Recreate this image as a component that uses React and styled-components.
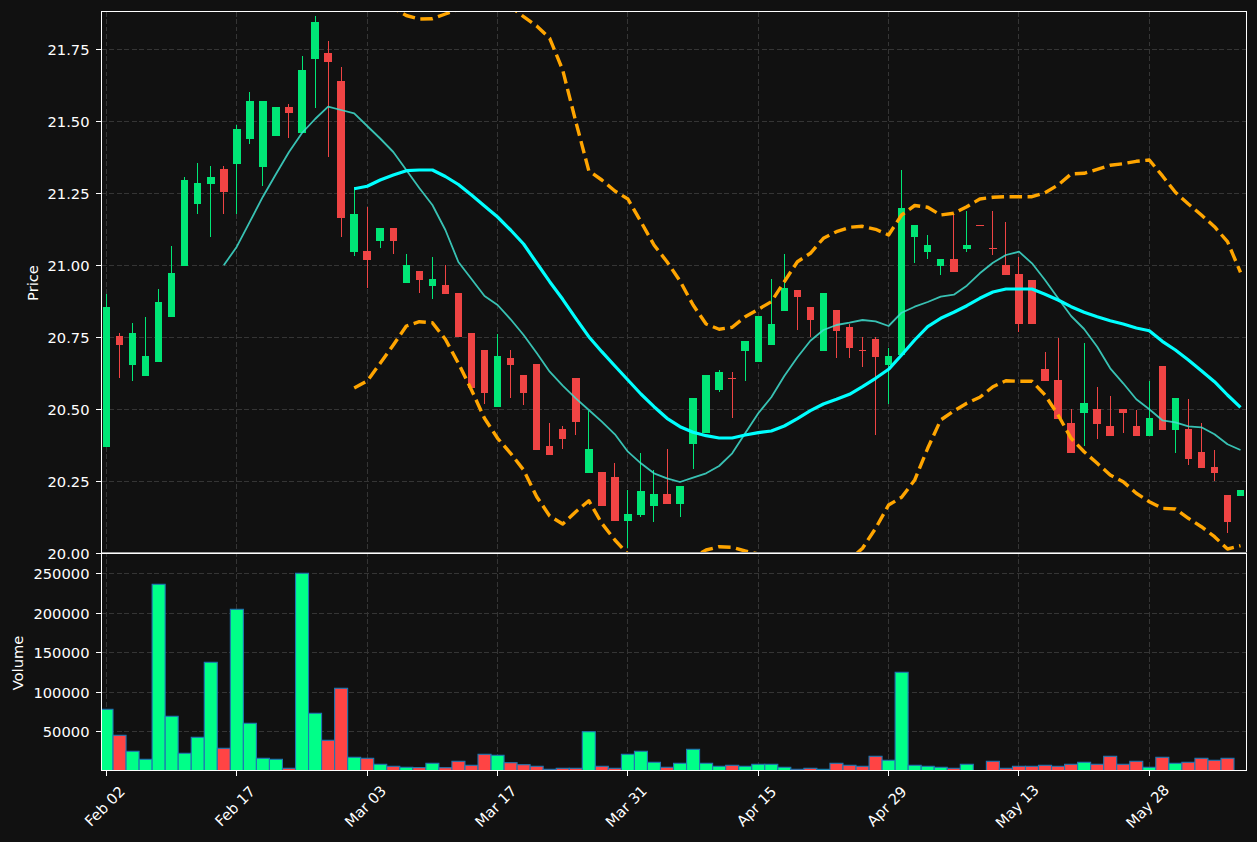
import React from "react";
import styled, { createGlobalStyle } from "styled-components";

const GlobalStyle = createGlobalStyle`
  html, body {
    margin: 0;
    height: 100%;
    background: #111111;
  }
`;

const WIDTH = 1257;
const HEIGHT = 842;
const LEFT = 101.5;
const RIGHT = 1246.5;
const TOP = 11.5;
const SPLIT = 553.5;
const BOTTOM = 770.5;

const xAt = (i) => 106.5 + 13.035 * i;

// wick top, body top, body bottom, wick bottom, direction (screen px)
const candles = [
  [294, 307.3, 446.7, 446.7, "u"], [333.3, 336, 344.7, 378.3, "d"], [322.7, 333.3, 364.7, 381.3, "u"], [316.7, 356.3, 375.7, 375.7, "u"],
  [288.7, 302.3, 361.7, 361.7, "u"], [245.7, 273.3, 316.7, 316.7, "u"], [177.3, 180.3, 265.7, 265.7, "u"], [163.3, 183.3, 203.7, 214.3, "u"],
  [166.3, 177.3, 183.7, 237.3, "u"], [166.3, 169.3, 191.7, 214.3, "d"], [124.7, 129.3, 163.7, 214.3, "u"], [92.3, 101.3, 138.7, 143.7, "u"],
  [101.3, 101.3, 166.7, 186.3, "u"], [107.3, 107.3, 135.7, 135.7, "u"], [104.3, 107.3, 112.7, 138.3, "d"], [56.3, 70.3, 132.7, 132.7, "u"],
  [16.3, 22.3, 58.7, 107.7, "u"], [41.3, 53.3, 61.7, 157.3, "d"], [67.3, 81.3, 217.7, 237.3, "d"], [186.7, 214.3, 251.7, 256.3, "u"],
  [206.7, 251.3, 259.7, 288, "d"], [228.3, 228.3, 240.7, 248.3, "u"], [228.3, 228.3, 240.7, 254.3, "d"], [254.3, 265.3, 282.7, 282.7, "u"],
  [271, 271, 279.5, 293, "d"], [257, 279, 285.7, 299.3, "u"], [265, 285, 293.7, 293.7, "d"], [293, 293, 337, 337, "d"],
  [333, 333, 387.7, 387.7, "d"], [350, 350, 392.7, 404.3, "d"], [334, 356.3, 406.7, 406.7, "u"], [350.3, 358.3, 365, 398.3, "d"],
  [375.3, 375.3, 392.7, 404.7, "d"], [364.3, 364.3, 449.7, 449.7, "d"], [423.3, 446.3, 455.3, 455.3, "d"], [426.3, 429.3, 438.7, 449.3, "d"],
  [378.3, 378.3, 421.7, 435.3, "d"], [411.3, 449.3, 472.7, 472.7, "u"], [472.3, 472.3, 505.7, 505.7, "d"], [463.3, 477.3, 520.7, 520.7, "d"],
  [489.7, 514.3, 520.7, 548.3, "u"], [452.7, 491.3, 514.7, 517.3, "u"], [470, 494.3, 505.7, 522.3, "u"], [449.3, 494.3, 503.7, 503.7, "d"],
  [486.3, 486.3, 503.7, 517.3, "u"], [398.3, 398.3, 443.7, 469.3, "u"], [375.3, 375.3, 432.7, 432.7, "u"], [370.3, 372.3, 389.7, 392.3, "u"],
  [372.3, 378, 379, 418.3, "d"], [341.3, 341.3, 350.7, 381.3, "u"], [316.3, 316.3, 361.7, 361.7, "u"], [279.3, 324.3, 344.7, 344.7, "u"],
  [254, 288.3, 310.7, 310.7, "u"], [290.3, 290.3, 296.7, 330.3, "d"], [307.3, 307.3, 319.7, 336.7, "d"], [293.3, 293.3, 350.7, 350.7, "u"],
  [310.3, 310.3, 330.7, 358.3, "d"], [324, 327.3, 347.7, 358.3, "d"], [336.7, 350, 351, 367.3, "d"], [336.7, 339.3, 356.7, 435.3, "d"],
  [347.7, 356.3, 365, 404.3, "u"], [170.3, 208.3, 354.7, 354.7, "u"], [225.3, 225.3, 236.7, 262.7, "u"], [234.7, 245, 251.7, 259.3, "u"],
  [259.3, 259.3, 265.7, 274.7, "u"], [213.3, 259.3, 271.7, 271.7, "d"], [211.3, 245.3, 248.7, 251.7, "u"], [225, 225, 226, 226, "d"],
  [211.3, 248, 249, 254.7, "d"], [222.3, 265.3, 274.7, 274.7, "d"], [257.3, 274.3, 323.7, 332, "d"], [280.3, 280.3, 323.7, 323.7, "d"],
  [351.7, 369.3, 380.7, 380.7, "d"], [337.7, 380.3, 418.7, 418.7, "d"], [409.3, 423.3, 452.7, 452.7, "d"], [343.3, 403.3, 412.7, 446, "u"],
  [386.7, 409.3, 423.7, 438.7, "d"], [395.7, 426.3, 435.7, 435.7, "d"], [409.3, 409.3, 412.7, 432.7, "d"], [409.7, 426.3, 435.7, 435.7, "d"],
  [380.7, 418.3, 435.7, 435.7, "u"], [366.3, 366.3, 429.7, 429.7, "d"], [398.3, 398.3, 429.7, 452.7, "u"], [398.7, 429.3, 458.7, 464.7, "d"],
  [423.3, 452.3, 467.7, 467.7, "d"], [449.7, 467.3, 472.7, 481.3, "d"], [495.3, 495.3, 521.7, 533.3, "d"], [490.3, 490.3, 495.7, 495.7, "u"],
];

// bar top (screen px) for each session; 771 means no visible volume
const volumeTops = [
  709.3, 735.3, 751.3, 759.3, 584.3, 716.3, 753.3, 737.3, 662.3, 748.3, 609.3, 723.3, 758.3, 759.3, 768.3, 573.3, 713.3, 740.3, 688.3, 757.3,
  758.3, 764.3, 766.3, 767.3, 767.6, 763.3, 767.7, 761.3, 765.3, 754.3, 755.3, 762.7, 764.7, 766.3, 769.3, 768.3, 768.3, 731.7, 766.3, 768.3,
  754.3, 751.3, 762.3, 767.3, 763.3, 749.3, 763.3, 766.3, 765.3, 766.3, 764.3, 764.3, 767.3, 769.3, 768.3, 769.3, 763.3, 765.3, 766.3, 756.3,
  760.3, 672.3, 765.3, 766.3, 767.3, 768.3, 764.3, 771, 761.3, 768.3, 766.3, 766.3, 765.3, 766.3, 764.3, 762.3, 764.3, 756.3, 764.3, 761.3,
  767.3, 757.3, 763.3, 762.3, 758.3, 760.3, 758.3, 771,
];

// first value belongs to the session index given by start
const fastMa = {
  start: 9,
  ys: [265.3, 246.7, 221.7, 196.7, 174, 152, 133, 119, 106.7, 110, 113.3, 126, 138.5, 152, 170, 188, 205, 230, 262, 279, 296, 305, 319.3, 335, 353, 371.7, 385.7, 398.3, 410, 421.7, 434.3, 451.7, 463.3, 473.3, 478.3, 482, 477.7, 473.3, 466, 453.3, 433.3, 413.3, 397.3, 376, 357.3, 340.7, 330, 325, 322.7, 320, 321.3, 326, 312.7, 306.7, 302, 296.7, 294.7, 285.7, 273.3, 262.7, 255, 251.7, 263.3, 280, 298.3, 316, 329, 346.7, 368.3, 383.3, 399.3, 409.3, 420.3, 422.3, 426.3, 427.3, 434.3, 444.3, 450],
};

const slowMa = {
  start: 19,
  ys: [188.7, 186.3, 180, 175, 170.7, 170, 170, 176.5, 184.5, 195, 206, 217, 230, 244, 263, 281.7, 299.3, 318.3, 336.7, 351.7, 366, 380, 394, 406.7, 418.3, 426.7, 432.3, 435.7, 438, 438, 435, 432.7, 431, 426, 418.7, 410.7, 404, 399.3, 394.3, 386.7, 378.3, 369.3, 355, 340, 326.7, 318.3, 312.3, 305.7, 298.3, 292, 289, 289, 289, 294.3, 300, 306.7, 312.3, 316.7, 320.7, 324, 328, 330.7, 341.3, 350, 360, 370.7, 381.7, 395, 407.3],
};

const upperBand = {
  start: 19,
  ys: [-8, -5, 2, 8, 15.5, 19, 18.7, 14, 9.3, 4, 2, 2, 6.7, 16.7, 26, 38.3, 70, 121.7, 170.7, 180, 191, 199, 221.7, 245, 261.7, 281, 305, 324, 329.3, 327.3, 316.7, 309.3, 301.7, 281.7, 261.7, 253.3, 238.3, 231.7, 227.3, 226.3, 229.3, 235, 215, 205.5, 207.3, 215, 213.3, 206.7, 199, 197.3, 196.7, 196.7, 196.7, 192.7, 185, 174, 173.3, 169.3, 165.3, 163.7, 161.3, 160, 175.7, 192.3, 204, 215, 226.7, 241.7, 272.3],
};

const lowerBand = {
  start: 19,
  ys: [388, 381, 363.3, 345, 326, 321.7, 322.7, 339.3, 363.3, 390, 418.3, 438.3, 453.3, 470, 496.7, 516, 524, 511.7, 500.7, 523.3, 540, 554, 570, 575, 570, 565, 557, 550, 546.7, 547.3, 551, 554, 558, 562, 566, 566, 566, 564, 560, 548.3, 528.3, 505, 497.3, 480, 448.3, 420, 411, 403.3, 397.3, 386.7, 380.7, 381.3, 381.3, 395, 415, 438.3, 451.7, 463.3, 475, 481.7, 493.3, 501.7, 508.3, 509, 518.3, 526.7, 536.7, 549, 545.7],
};

const toPoints = ({ start, ys }) =>
  ys.map((y, i) => `${xAt(start + i).toFixed(1)},${y}`).join(" ");

const priceTicks = [
  ["21.75", 49.5], ["21.50", 121.5], ["21.25", 193.5], ["21.00", 265.5],
  ["20.75", 337.5], ["20.50", 409.5], ["20.25", 481.5], ["20.00", 553.5],
];
const volumeTicks = [
  ["250000", 573.5], ["200000", 613.5], ["150000", 652.5], ["100000", 692.5], ["50000", 731.5],
];
const dateTicks = [
  ["Feb 02", 0], ["Feb 17", 10], ["Mar 03", 20], ["Mar 17", 30], ["Mar 31", 40],
  ["Apr 15", 50], ["Apr 29", 60], ["May 13", 70], ["May 28", 80],
];

const Page = styled.main`
  width: ${WIDTH}px;
  height: ${HEIGHT}px;
  display: flex;
  background: #111111;
`;

const ChartCanvas = styled.svg`
  display: block;
  flex: 1;
`;

const GridLine = styled.line`
  stroke: #353535;
  stroke-width: 1;
  stroke-dasharray: 5 2.5;
  shape-rendering: crispEdges;
`;

const Spine = styled.rect`
  fill: none;
  stroke: #ffffff;
  stroke-width: 1;
  shape-rendering: crispEdges;
`;

const SplitEdge = styled.line`
  stroke: #9a9a9a;
  stroke-width: 1;
  shape-rendering: crispEdges;
`;

const Tick = styled.line`
  stroke: #ffffff;
  stroke-width: 1;
  shape-rendering: crispEdges;
`;

const AxisText = styled.text`
  fill: #ffffff;
  font-family: "DejaVu Sans", sans-serif;
  font-size: 14.7px;
`;

const ValueLabel = styled(AxisText)`
  text-anchor: end;
  dominant-baseline: central;
`;

const CenterLabel = styled(AxisText)`
  text-anchor: middle;
  dominant-baseline: central;
`;

const Wick = styled.line`
  stroke: ${(p) => (p.$up ? "#00e676" : "#ef4444")};
  stroke-width: 1;
  shape-rendering: crispEdges;
`;

const Body = styled.rect`
  fill: ${(p) => (p.$up ? "#00e676" : "#ef4444")};
  shape-rendering: crispEdges;
`;

const VolumeBar = styled.rect`
  fill: ${(p) => (p.$up ? "#00ff88" : "#ff4444")};
  stroke: #1f77b4;
  stroke-width: 1.1;
`;

const MaLine = styled.polyline`
  fill: none;
  stroke: ${(p) => p.$color};
  stroke-width: ${(p) => p.$weight};
  stroke-linejoin: round;
  opacity: ${(p) => p.$alpha || 1};
`;

const BandLine = styled.polyline`
  fill: none;
  stroke: #ffa500;
  stroke-width: 3.4;
  stroke-dasharray: 12.5 5.5;
  stroke-linejoin: round;
`;

const Candle = ({ index, data }) => {
  const [high, top, bottom, low, dir] = data;
  const x = xAt(index);
  const up = dir === "u";
  return (
    <g>
      <Wick $up={up} x1={x} x2={x} y1={high} y2={low} />
      <Body $up={up} x={x - 3.75} y={top} width={7.5} height={bottom - top} />
    </g>
  );
};

const App = () => {
  return (
    <Page>
      <GlobalStyle />
      <ChartCanvas width={WIDTH} height={HEIGHT} viewBox={`0 0 ${WIDTH} ${HEIGHT}`}>
        <defs>
          <clipPath id="pricePanel">
            <rect x={LEFT} y={TOP} width={RIGHT - LEFT} height={SPLIT - TOP} />
          </clipPath>
          <clipPath id="volumePanel">
            <rect x={LEFT} y={SPLIT} width={RIGHT - LEFT} height={BOTTOM - SPLIT} />
          </clipPath>
        </defs>

        {/* grid */}
        {priceTicks.slice(0, 7).concat(volumeTicks).map(([label, y]) => (
          <GridLine key={label} x1={LEFT} x2={RIGHT} y1={y} y2={y} />
        ))}
        {dateTicks.map(([label, i]) => (
          <GridLine key={label} x1={xAt(i)} x2={xAt(i)} y1={TOP} y2={BOTTOM} />
        ))}

        {/* price panel */}
        <g clipPath="url(#pricePanel)">
          {candles.map((c, i) => (
            <Candle key={i} index={i} data={c} />
          ))}
          <MaLine points={toPoints(fastMa)} $color="#40e0d0" $weight={1.8} $alpha={0.85} />
          <MaLine points={toPoints(slowMa)} $color="#00ffff" $weight={3.2} />
          <BandLine points={toPoints(upperBand)} />
          <BandLine points={toPoints(lowerBand)} />
        </g>

        {/* volume panel */}
        <g clipPath="url(#volumePanel)">
          {volumeTops.map((top, i) =>
            top < 771 ? (
              <VolumeBar
                key={i}
                $up={candles[i][4] === "u"}
                x={xAt(i) - 6.5}
                y={top}
                width={13}
                height={771 - top}
              />
            ) : null
          )}
        </g>

        {/* frames and axes */}
        <Spine x={LEFT} y={TOP} width={RIGHT - LEFT} height={BOTTOM - TOP} />
        <SplitEdge x1={LEFT} x2={RIGHT} y1={SPLIT - 1} y2={SPLIT - 1} />
        <Tick x1={LEFT} x2={RIGHT} y1={SPLIT} y2={SPLIT} />

        {priceTicks.concat(volumeTicks).map(([label, y]) => (
          <g key={label}>
            <Tick x1={96} x2={LEFT} y1={y} y2={y} />
            <ValueLabel x={89.5} y={y - 0.5}>
              {label}
            </ValueLabel>
          </g>
        ))}

        {dateTicks.map(([label, i]) => (
          <g key={label}>
            <Tick x1={xAt(i)} x2={xAt(i)} y1={BOTTOM} y2={BOTTOM + 5} />
            <CenterLabel
              x={xAt(i) - 2}
              y={806}
              transform={`rotate(-45 ${xAt(i) - 2} 806)`}
            >
              {label}
            </CenterLabel>
          </g>
        ))}

        <CenterLabel x={32} y={283} transform="rotate(-90 32 283)">
          Price
        </CenterLabel>
        <CenterLabel x={17} y={663} transform="rotate(-90 17 663)">
          Volume
        </CenterLabel>
      </ChartCanvas>
    </Page>
  );
};

export default App;
